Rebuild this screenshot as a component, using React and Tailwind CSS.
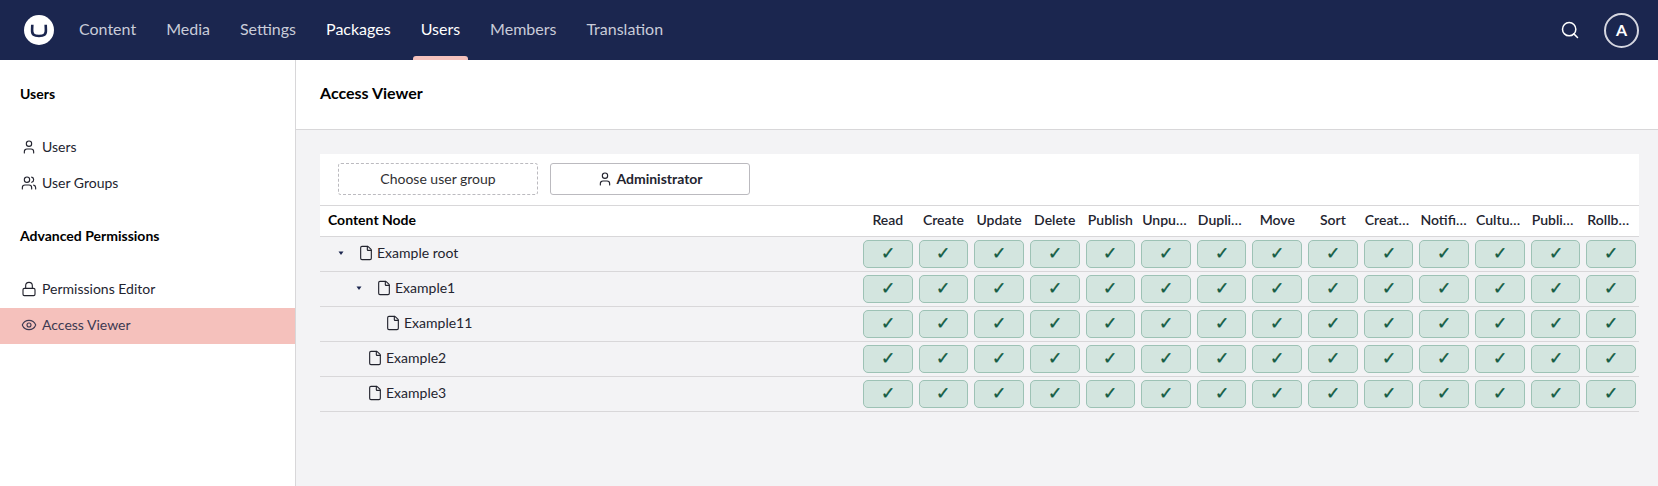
import { Search, User, Users, Lock, Eye, File } from 'lucide-react'

const NAV = [
  { label: 'Content', cls: 'text-[#c9ccd9]' },
  { label: 'Media', cls: 'text-[#c9ccd9]' },
  { label: 'Settings', cls: 'text-[#c9ccd9]' },
  { label: 'Packages', cls: 'text-white' },
  { label: 'Users', cls: 'text-white', active: true },
  { label: 'Members', cls: 'text-[#c9ccd9]' },
  { label: 'Translation', cls: 'text-[#c9ccd9]' },
]

const COLUMNS = ['Read', 'Create', 'Update', 'Delete', 'Publish', 'Unpublish', 'Duplicate', 'Move', 'Sort', 'Create Blueprint', 'Notifications', 'Culture and Hostnames', 'Public Access', 'Rollback']

const ROWS = [
  { name: 'Example root', caret: true, indent: 'pl-[18px]' },
  { name: 'Example1', caret: true, indent: 'pl-[36px]' },
  { name: 'Example11', indent: 'pl-[65px]' },
  { name: 'Example2', indent: 'pl-[47px]' },
  { name: 'Example3', indent: 'pl-[47px]' },
]

function Logo() {
  return (
    <svg width="30" height="30" viewBox="0 0 30 30" className="shrink-0">
      <circle cx="15" cy="15" r="15" fill="#fff" />
      <path d="M8.3 9.8 L8.1 14.8 C7.9 20 10 21 15 21 C20 21 22.1 20 21.9 14.8 L21.7 9.8" fill="none" stroke="#1b264f" strokeWidth="2.6" />
    </svg>
  )
}

function SideItem({ icon: Icon, label, active }) {
  return (
    <div className={`flex h-9 items-center gap-[5px] pb-[2px] pl-[21px] text-sm ${active ? 'bg-[#f5c1bc] text-[#3d3a52]' : 'text-[#23242f]'}`}>
      <Icon size={16} strokeWidth={1.7} className="shrink-0" />
      <span>{label}</span>
    </div>
  )
}

function Caret() {
  return (
    <svg width="6" height="6" viewBox="0 0 6 6" className="shrink-0">
      <polygon points="0.5,1.5 5.5,1.5 3,5" fill="#1b264f" />
    </svg>
  )
}

export default function App() {
  return (
    <div className="flex h-[486px] w-[1658px] flex-col overflow-hidden bg-[#f3f3f5] font-['Lato','Liberation_Sans',sans-serif] text-[#23242f]">
      {/* top bar */}
      <header className="flex h-[60px] shrink-0 items-center bg-[#1b264f] pl-6 pr-[19px]">
        <Logo />
        <nav className="ml-[10px] flex h-full items-stretch">
          {NAV.map((n) => (
            <div key={n.label} className={`relative flex items-center px-[15px] pb-[2px] text-base ${n.cls}`}>
              {n.label}
              {n.active && <span className="absolute bottom-0 left-[7px] right-[7px] h-1 rounded-t-[3px] bg-[#f5c1bc]" />}
            </div>
          ))}
        </nav>
        <div className="ml-auto flex items-center gap-6">
          <Search size={20} strokeWidth={1.8} className="text-white" />
          <div className="flex h-[35px] w-[35px] items-center justify-center rounded-full border-2 border-[#d5d6e0] text-base font-bold text-white">A</div>
        </div>
      </header>

      <div className="flex min-h-0 flex-1">
        {/* sidebar */}
        <aside className="w-[296px] shrink-0 border-r border-[#d8d7d9] bg-white pt-[25px]">
          <h3 className="pl-5 text-sm font-bold leading-[18px] text-black">Users</h3>
          <div className="mt-[27px]">
            <SideItem icon={User} label="Users" />
            <SideItem icon={Users} label="User Groups" />
          </div>
          <h3 className="mt-[25px] pl-5 text-sm font-bold leading-[18px] text-black">Advanced Permissions</h3>
          <div className="mt-[27px]">
            <SideItem icon={Lock} label="Permissions Editor" />
            <SideItem icon={Eye} label="Access Viewer" active />
          </div>
        </aside>

        {/* main */}
        <main className="min-w-0 flex-1">
          <div className="flex h-[70px] items-center border-b border-[#d8d7d9] bg-white pb-1 pl-6 text-base font-bold text-black">Access Viewer</div>
          <div className="ml-6 mr-[19px] mt-6">
            <div className="flex h-[51px] items-start gap-3 bg-white pl-[18px] pt-[9px]">
              <button className="flex h-8 w-[200px] items-center justify-center rounded-[3px] border border-dashed border-[#bbbabf] text-sm text-[#303033]">Choose user group</button>
              <button className="flex h-8 w-[200px] items-center justify-center gap-[3px] rounded-[3px] border border-[#bbbabf] text-sm font-bold text-[#23242f]">
                <User size={16} strokeWidth={1.7} />
                Administrator
              </button>
            </div>
            <div className="grid h-[32px] grid-cols-[540px_repeat(14,minmax(0,1fr))] items-center border-y border-[#d8d7d9] bg-white pb-[2px] text-sm">
              <div className="pl-2 font-bold text-black">Content Node</div>
              {COLUMNS.map((c) => (
                <div key={c} className="truncate px-[4px] text-center font-semibold text-[#23242f]">{c}</div>
              ))}
            </div>
            {ROWS.map((r) => (
              <div key={r.name} className="grid h-[35px] grid-cols-[540px_repeat(14,minmax(0,1fr))] items-center border-b border-[#d8d7d9] text-sm">
                <div className={`flex items-center pb-[2px] ${r.indent}`}>
                  {r.caret && <span className="mr-[14px] flex"><Caret /></span>}
                  <File size={16} strokeWidth={1.7} className="mr-[3px] shrink-0" />
                  <span>{r.name}</span>
                </div>
                {COLUMNS.map((c) => (
                  <div key={c} className="px-[3px]">
                    <div className="flex h-7 items-center justify-center rounded-[5px] border border-[#9dc2b5] bg-[#d3e5df] pb-[2px] text-[17px] text-[#125c43] [-webkit-text-stroke:0.4px_#125c43]">✓</div>
                  </div>
                ))}
              </div>
            ))}
          </div>
        </main>
      </div>
    </div>
  )
}
